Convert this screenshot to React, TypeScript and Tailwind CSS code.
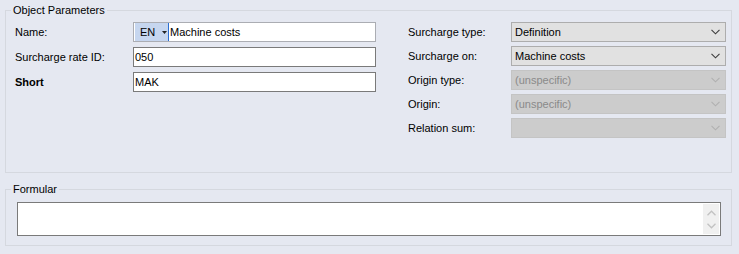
import React from "react";

function Chevron({ color }: { color: string }) {
  return (
    <svg width="9" height="6" viewBox="0 0 9 6" className="shrink-0">
      <polyline points="0.5,0.8 4.5,4.8 8.5,0.8" fill="none" stroke={color} strokeWidth="1.1" />
    </svg>
  );
}

function Select({ value, disabled }: { value: string; disabled?: boolean }) {
  return (
    <div
      className={
        disabled
          ? "w-[215px] h-[20px] flex items-center justify-between pl-[3px] pr-[5px] border border-[#c4c4c4] bg-[#cccccc] text-[#8a8a8a]"
          : "w-[215px] h-[20px] flex items-center justify-between pl-[3px] pr-[5px] border border-[#adadad] bg-[#e1e1e1] text-black"
      }
    >
      <span>{value}</span>
      <Chevron color={disabled ? "#b0b0b0" : "#3c3c3c"} />
    </div>
  );
}

function Row({ label, children, bold }: { label: string; children: React.ReactNode; bold?: boolean }) {
  return (
    <div className="flex items-center">
      <div className={bold ? "w-[118px] font-bold" : "w-[118px]"}>{label}</div>
      {children}
    </div>
  );
}

function RRow({ label, children }: { label: string; children: React.ReactNode }) {
  return (
    <div className="flex items-center">
      <div className="w-[103px]">{label}</div>
      {children}
    </div>
  );
}

export default function App() {
  return (
    <div className="w-[739px] h-[254px] bg-[#e5e8f1] pt-[4px] pl-[5px] font-['Liberation_Sans',Arial,sans-serif] text-[11px] text-black leading-[13px]">
      <fieldset className="w-[727px] h-[169px] border border-[#d5d8df]">
        <legend className="ml-[5px] px-[2px] leading-[13px]">Object Parameters</legend>
        <div className="flex pl-[9px] pt-[5px]">
          <div className="flex flex-col gap-[5px]">
            <Row label="Name:">
              <div className="w-[243px] h-[20px] flex items-center border border-[#abadb3] bg-white pl-[1px]">
                <div className="h-[18px] w-[33px] bg-[#c6d6ef] flex items-center pl-[5px] gap-[7px]">
                  <span>EN</span>
                  <svg width="5" height="3" viewBox="0 0 5 3">
                    <polygon points="0,0 5,0 2.5,3" fill="#222" />
                  </svg>
                </div>
                <div className="w-[1px] h-[18px] bg-[#2b6fd3]" />
                <span className="pl-[1px]">Machine costs</span>
              </div>
            </Row>
            <Row label="Surcharge rate ID:">
              <div className="w-[243px] h-[20px] flex items-center border border-[#7a7a7a] bg-white pl-[1px]">
                050
              </div>
            </Row>
            <Row label="Short" bold>
              <div className="w-[243px] h-[20px] flex items-center border border-[#7a7a7a] bg-white pl-[1px]">
                MAK
              </div>
            </Row>
          </div>
          <div className="flex flex-col gap-[4px] ml-[32px]">
            <RRow label="Surcharge type:">
              <Select value="Definition" />
            </RRow>
            <RRow label="Surcharge on:">
              <Select value="Machine costs" />
            </RRow>
            <RRow label="Origin type:">
              <Select value="(unspecific)" disabled />
            </RRow>
            <RRow label="Origin:">
              <Select value="(unspecific)" disabled />
            </RRow>
            <RRow label="Relation sum:">
              <Select value="" disabled />
            </RRow>
          </div>
        </div>
      </fieldset>
      <fieldset className="w-[727px] h-[63px] mt-[10px] border border-[#d5d8df]">
        <legend className="ml-[5px] px-[2px] leading-[13px]">Formular</legend>
        <div className="pl-[11px] pt-[6px]">
          <div className="w-[704px] h-[34px] border border-[#7a7a7a] bg-white flex justify-end p-[1px]">
            <div className="w-[16px] h-full bg-[#f0f0f0] flex flex-col items-center justify-around py-[2px]">
              <svg width="9" height="6" viewBox="0 0 9 6">
                <polyline points="0.5,5.2 4.5,1.2 8.5,5.2" fill="none" stroke="#c2c2c2" strokeWidth="1.3" />
              </svg>
              <svg width="9" height="6" viewBox="0 0 9 6">
                <polyline points="0.5,0.8 4.5,4.8 8.5,0.8" fill="none" stroke="#c2c2c2" strokeWidth="1.3" />
              </svg>
            </div>
          </div>
        </div>
      </fieldset>
    </div>
  );
}
